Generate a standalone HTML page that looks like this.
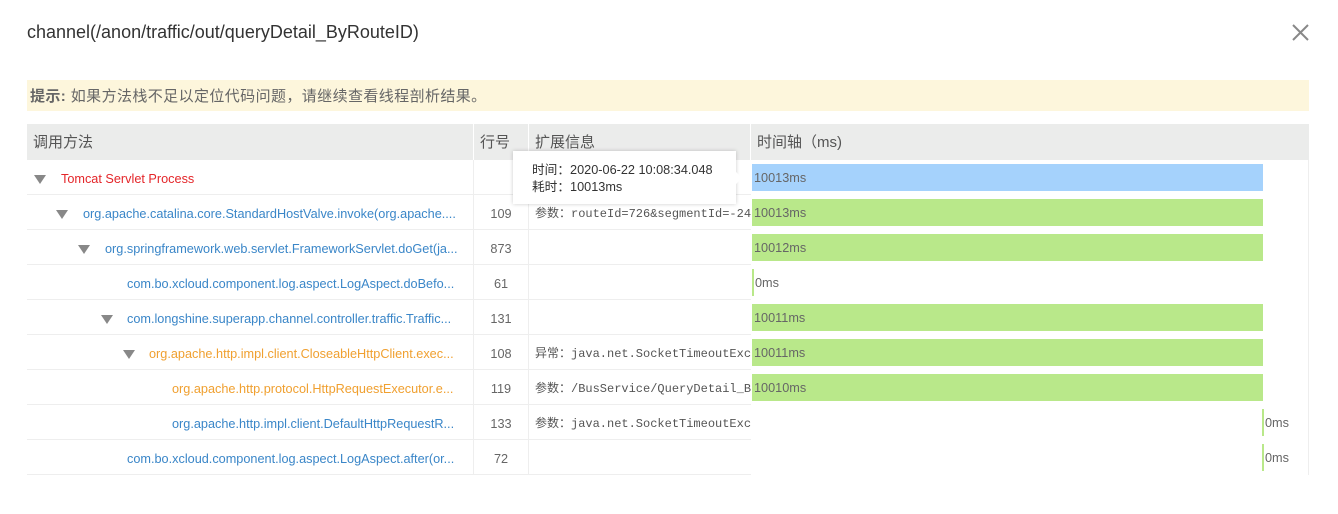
<!DOCTYPE html>
<html><head><meta charset="utf-8"><style>
*{margin:0;padding:0;box-sizing:border-box}
body{width:1338px;height:514px;background:#fff;font-family:"Liberation Sans","Noto Sans CJK SC",sans-serif;position:relative;overflow:hidden;color:#333}
.title{position:absolute;left:27px;top:22px;font-size:18px;color:#333}
.close{position:absolute;left:1292px;top:24px;width:17px;height:17px}
.hint{position:absolute;left:27px;top:80px;width:1282px;height:31px;background:#fdf6dc;font-size:15px;line-height:33px;padding-left:3px;color:#666;letter-spacing:0.4px}
.hint b{color:#666}
.tbl{position:absolute;left:27px;top:124px;width:1282px}
.hd{height:36px;background:#ebeceb;display:flex;font-size:15px;color:#555;line-height:38px}
.hd div{padding-left:6px;border-right:1px solid #fff}
.row{height:35px;display:flex;font-size:12.7px;line-height:38px}
.c1{width:447px;border-right:1px solid #eee;border-bottom:1px solid #eee;white-space:nowrap;overflow:hidden;position:relative}
.c2{width:55px;border-right:1px solid #eee;border-bottom:1px solid #eee;text-align:center;color:#666}
.c3{width:222px;border-bottom:1px solid #eee;font-family:"Liberation Mono","Noto Sans CJK SC",monospace;font-size:12px;color:#555;white-space:nowrap;overflow:hidden;padding-left:6px}
.c4{width:558px;position:relative;border-right:1px solid #eee}
.tri{position:absolute;top:15px;width:0;height:0;border-left:6px solid transparent;border-right:6px solid transparent;border-top:9px solid #888}
.t{position:absolute;top:0}
.blue{color:#3a86c8}.red{color:#e4262a}.org{color:#f0a030}
.bar{position:absolute;left:1px;top:4px;height:27px;background:#b9e88a;font-size:12.7px;line-height:28px;color:#666;padding-left:2px}
.bar.b{background:#a5d2fc}
.z{position:absolute;top:4px;height:27px;border-left:2px solid #b9e88a;font-size:12.7px;line-height:28px;color:#666;padding-left:1px}
.tip{position:absolute;left:513px;top:151px;width:223px;height:53px;background:#fff;box-shadow:0 0 4px rgba(0,0,0,.2);font-size:12.7px;line-height:17px;padding:11px 0 0 19px;color:#333}
.tip:after{content:"";position:absolute;right:-6px;top:21px;border-top:6px solid transparent;border-bottom:6px solid transparent;border-left:6px solid #fff}
</style></head><body>
<div class="title">channel(/anon/traffic/out/queryDetail_ByRouteID)</div>
<svg class="close" viewBox="0 0 17 17"><path d="M1 1L16 16M16 1L1 16" stroke="#888" stroke-width="2"/></svg>
<div class="hint"><b>提示:</b> 如果方法栈不足以定位代码问题，请继续查看线程剖析结果。</div>
<div class="tbl">
<div class="hd"><div style="width:447px">调用方法</div><div style="width:55px">行号</div><div style="width:222px">扩展信息</div><div style="width:558px;border:none">时间轴（ms)</div></div>
<div class="row"><div class="c1"><span class="tri" style="left:7px"></span><span class="t red" style="left:34px">Tomcat Servlet Process</span></div><div class="c2"></div><div class="c3"></div><div class="c4"><div class="bar b" style="width:511px">10013ms</div></div></div>
<div class="row"><div class="c1"><span class="tri" style="left:29px"></span><span class="t blue" style="left:56px">org.apache.catalina.core.StandardHostValve.invoke(org.apache....</span></div><div class="c2">109</div><div class="c3">参数：routeId=726&amp;segmentId=-24</div><div class="c4"><div class="bar" style="width:511px">10013ms</div></div></div>
<div class="row"><div class="c1"><span class="tri" style="left:51px"></span><span class="t blue" style="left:78px">org.springframework.web.servlet.FrameworkServlet.doGet(ja...</span></div><div class="c2">873</div><div class="c3"></div><div class="c4"><div class="bar" style="width:511px">10012ms</div></div></div>
<div class="row"><div class="c1"><span class="t blue" style="left:100px">com.bo.xcloud.component.log.aspect.LogAspect.doBefo...</span></div><div class="c2">61</div><div class="c3"></div><div class="c4"><div class="z" style="left:1px">0ms</div></div></div>
<div class="row"><div class="c1"><span class="tri" style="left:74px"></span><span class="t blue" style="left:100px">com.longshine.superapp.channel.controller.traffic.Traffic...</span></div><div class="c2">131</div><div class="c3"></div><div class="c4"><div class="bar" style="width:511px">10011ms</div></div></div>
<div class="row"><div class="c1"><span class="tri" style="left:96px"></span><span class="t org" style="left:122px">org.apache.http.impl.client.CloseableHttpClient.exec...</span></div><div class="c2">108</div><div class="c3">异常：java.net.SocketTimeoutExc</div><div class="c4"><div class="bar" style="width:511px">10011ms</div></div></div>
<div class="row"><div class="c1"><span class="t org" style="left:145px">org.apache.http.protocol.HttpRequestExecutor.e...</span></div><div class="c2">119</div><div class="c3">参数：/BusService/QueryDetail_B</div><div class="c4"><div class="bar" style="width:511px">10010ms</div></div></div>
<div class="row"><div class="c1"><span class="t blue" style="left:145px">org.apache.http.impl.client.DefaultHttpRequestR...</span></div><div class="c2">133</div><div class="c3">参数：java.net.SocketTimeoutExc</div><div class="c4"><div class="z" style="left:511px">0ms</div></div></div>
<div class="row"><div class="c1"><span class="t blue" style="left:100px">com.bo.xcloud.component.log.aspect.LogAspect.after(or...</span></div><div class="c2">72</div><div class="c3"></div><div class="c4"><div class="z" style="left:511px">0ms</div></div></div>
</div>
<div class="tip">时间：2020-06-22 10:08:34.048<br>耗时：10013ms</div>
</body></html>
